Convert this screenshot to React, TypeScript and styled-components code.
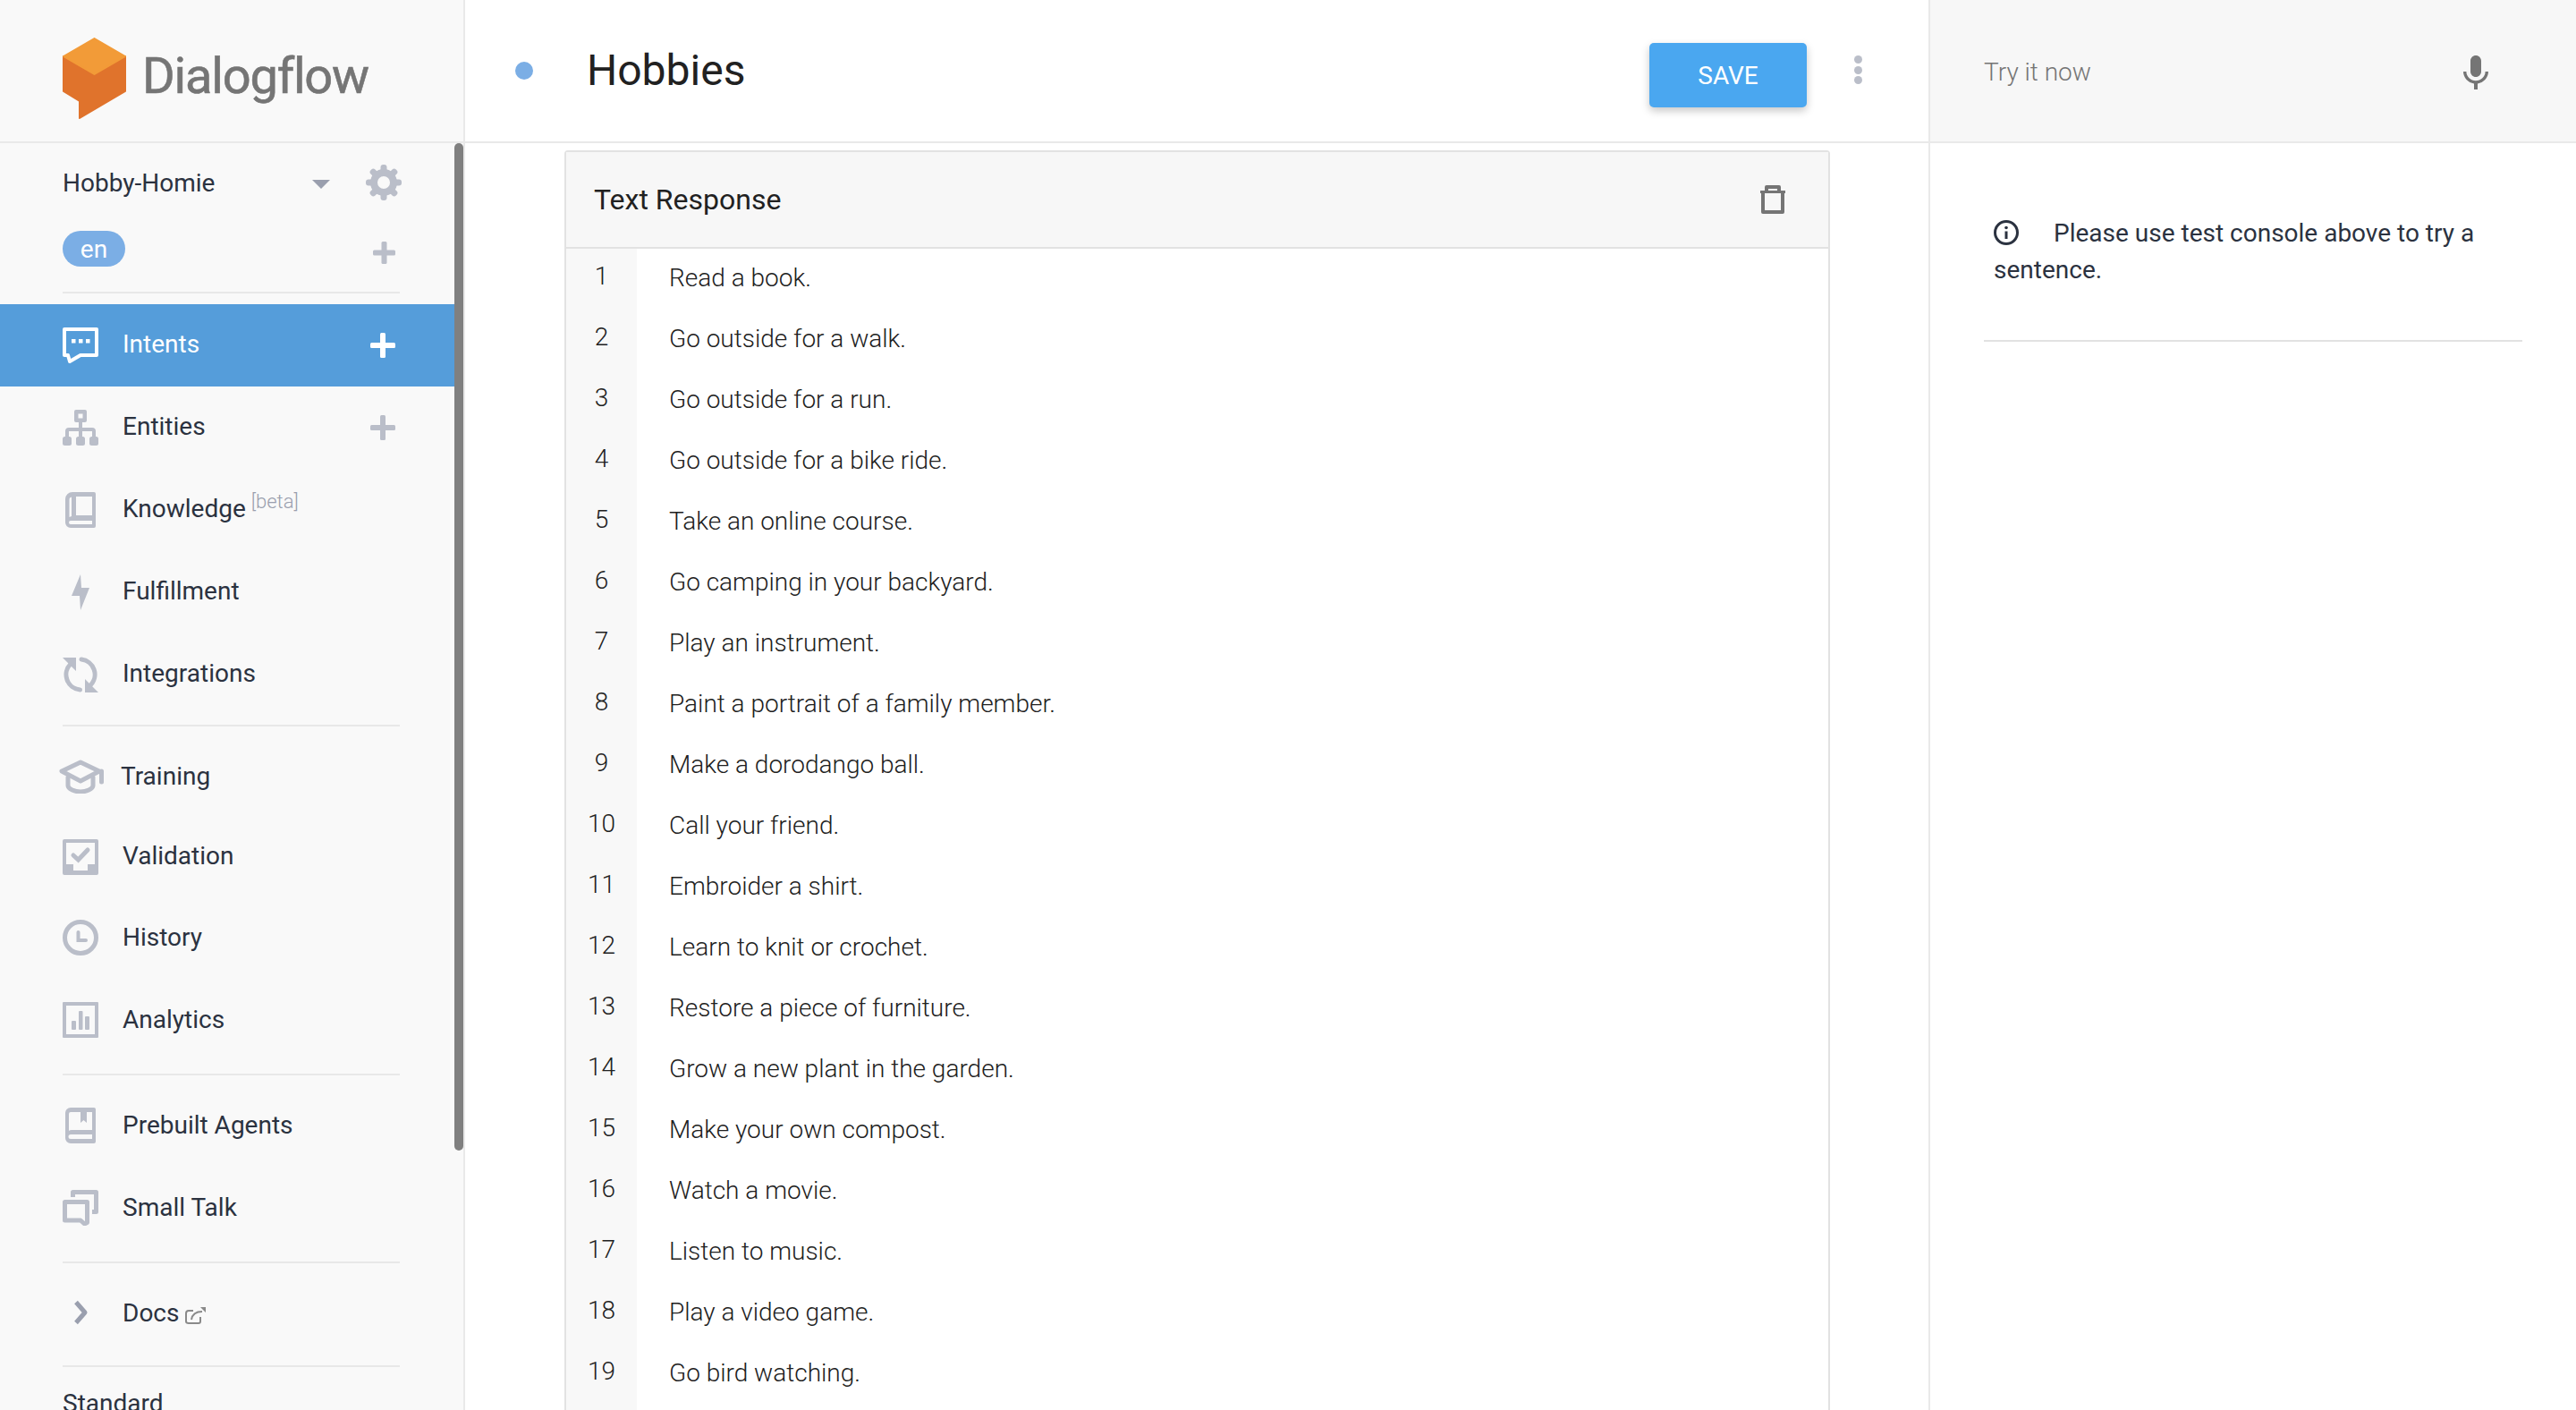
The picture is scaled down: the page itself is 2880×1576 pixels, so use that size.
import React from 'react';
import styled, {createGlobalStyle} from 'styled-components';

const GlobalStyle = createGlobalStyle`
  html, body {
    margin: 0;
    padding: 0;
    background: #fff;
    overflow: hidden;
  }
  * {
    box-sizing: border-box;
  }
  body {
    font-family: Roboto, "Liberation Sans", sans-serif;
    font-size: 28px;
    color: #2b3240;
  }
`

const Page = styled.div`
  display: flex;
  width: 2880px;
  height: 1576px;
  overflow: hidden;
`

/* sidebar */

const Sidebar = styled.aside`
  position: relative;
  flex: 0 0 520px;
  height: 100%;
  overflow: hidden;
  background: #f9f9f9;
  border-right: 2px solid #e9e9e9;
`

const Scrollbar = styled.div`
  position: absolute;
  top: 160px;
  left: 508px;
  width: 10px;
  height: 1126px;
  background: #808080;
  border-radius: 5px;
`

const LogoBar = styled.div`
  display: flex;
  align-items: center;
  height: 160px;
  padding: 18px 0 0 70px;
  border-bottom: 2px solid #e9e9e9;
`

const LogoText = styled.span`
  margin: -7px 0 0 18px;
  font-size: 56px;
  letter-spacing: -1.2px;
  color: #757575;
  line-height: 60px;
  -webkit-text-stroke: 0.6px #757575;
`

const AgentRow = styled.div`
  display: flex;
  align-items: center;
  height: 88px;
  width: 508px;
  padding: 0 59px 0 70px;
`

const AgentName = styled.span`
  flex: 1;
`

const Caret = styled.span`
  width: 0;
  height: 0;
  margin: 4px 40px 0 0;
  border-left: 10px solid transparent;
  border-right: 10px solid transparent;
  border-top: 10px solid #9a9fae;
`

const LangRow = styled.div`
  display: flex;
  align-items: center;
  justify-content: space-between;
  height: 60px;
  width: 508px;
  padding: 0 66px 0 70px;
`

const LangChip = styled.span`
  display: flex;
  align-items: center;
  justify-content: center;
  width: 70px;
  height: 40px;
  border-radius: 20px;
  background: #7baee5;
  color: #fff;
`

const Divider = styled.div<{ $top: number }>`
  width: 377px;
  height: 2px;
  margin: ${p => p.$top}px 0 0 70px;
  background: #e8e8e8;
`

const Nav = styled.nav<{ $top: number }>`
  width: 508px;
  margin-top: ${p => p.$top}px;
`

const NavItem = styled.div<{ $active?: boolean, $height?: number }>`
  display: flex;
  align-items: center;
  height: ${p => p.$height || 92}px;
  padding: 0 66px 0 70px;
  background: ${p => p.$active ? '#559dda' : 'transparent'};
  color: ${p => p.$active ? '#fff' : '#2b3240'};
`

const IconSlot = styled.span`
  display: flex;
  flex: 0 0 40px;
  min-width: 0;
  justify-content: center;
  align-items: center;
  height: 40px;
  margin-right: 27px;
  color: #babec9;

  svg {
    flex-shrink: 0;
    display: block;
  }
`

const NavLabel = styled.span<{ $tight?: boolean, $low?: boolean }>`
  margin-left: ${p => p.$tight ? -2 : 0}px;
  margin-top: ${p => p.$low ? -1 : -3}px;
`

const Beta = styled.sup`
  margin-left: 6px;
  font-size: 22px;
  font-weight: 300;
  line-height: 0;
  color: #9a9fae;
`

const NavPlus = styled.span<{ $drop?: number }>`
  display: flex;
  margin-left: auto;
  margin-top: ${p => p.$drop || 0}px;
  color: #babec9;
`

const ActivePlus = styled(NavPlus)`
  color: #fff;
`

const DocsLink = styled.span`
  display: flex;
  margin: 3px 0 0 7px;
`

const PlanLabel = styled.div`
  margin: 27px 0 0 70px;
  line-height: 28px;
`

/* main column */

const Main = styled.main`
  flex: 0 0 1636px;
  height: 100%;
  overflow: hidden;
  background: #fff;
`

const MainHeader = styled.header`
  display: flex;
  align-items: center;
  height: 160px;
  padding: 0 74px 0 56px;
  border-bottom: 2px solid #e9e9e9;
`

const StatusDot = styled.span`
  flex: 0 0 20px;
  height: 20px;
  border-radius: 50%;
  background: #7baee5;
`

const Title = styled.h1`
  margin: 0 0 2px 60px;
  font-size: 48px;
  font-weight: 400;
  color: #212121;
`

const SaveButton = styled.button`
  width: 176px;
  height: 72px;
  margin: 10px 0 0 auto;
  border: 0;
  border-radius: 5px;
  background: #4aa7f0;
  color: #fff;
  font-family: Roboto, sans-serif;
  font-size: 28px;
  box-shadow: 0 4px 10px rgba(0, 0, 0, .22);
`

const MoreDots = styled.span`
  display: flex;
  flex-direction: column;
  gap: 2.5px;
  margin: -2px 0 0 53px;

  i {
    width: 9px;
    height: 9px;
    border-radius: 50%;
    background: #babec9;
  }
`

const Body = styled.div`
  padding: 8px 0 0 111px;
`

const Card = styled.section`
  width: 1415px;
  border: 2px solid #e2e2e2;
  border-bottom: 0;
  border-radius: 4px 4px 0 0;
`

const CardHeader = styled.div`
  display: flex;
  align-items: center;
  justify-content: space-between;
  height: 108px;
  padding: 0 47px 0 31px;
  background: #f7f7f7;
  border-bottom: 2px solid #e2e2e2;
  color: #212121;
  font-size: 32px;
`

const Row = styled.div`
  display: flex;
  height: 68px;
`

const RowNumber = styled.div`
  flex: 0 0 79px;
  background: #f8f8f8;
  text-align: center;
  line-height: 62px;
  font-weight: 300;
  color: #212121;
`

const RowText = styled.div`
  padding-left: 36px;
  line-height: 66px;
  font-weight: 300;
  color: #212121;
`

/* test console */

const Console = styled.aside`
  flex: 1;
  height: 100%;
  border-left: 2px solid #e9e9e9;
`

const ConsoleHeader = styled.div`
  display: flex;
  align-items: center;
  justify-content: space-between;
  height: 160px;
  padding: 3px 88px 0 60px;
  background: #f7f7f7;
  border-bottom: 2px solid #e9e9e9;
  color: #757575;
  font-weight: 300;

  svg {
    margin-top: 2px;
  }
`

const ConsoleBody = styled.div`
  padding: 80px 60px 0;
`

const Message = styled.p`
  margin: 0;
  padding-left: 11px;
  line-height: 41px;
  color: #2b3240;

  svg {
    display: inline-block;
    vertical-align: -4px;
    margin-right: 39px;
  }
`

const ConsoleRule = styled.div`
  height: 2px;
  margin-top: 58px;
  background: #e2e2e2;
`

/* drawings */

const Logo = () => (
  <svg width="71" height="92" viewBox="0 0 71 92">
    <path fill="#e0732c" stroke="#e0732c" strokeWidth="2" strokeLinejoin="round"
          d="M1 21 35.500 41 70 21V60L19 90V71L1 60Z"/>
    <path fill="#f29b38" stroke="#f29b38" strokeWidth="2" strokeLinejoin="round"
          d="M35.500 1 70 21 35.500 41 1 21Z"/>
  </svg>
)

const TEETH = [0, 45, 90, 135, 180, 225, 270, 315]

const Gear = () => (
  <svg width="40" height="40" viewBox="0 0 40 40" fill="#babec9">
    {TEETH.map(angle =>
      <rect key={angle} x="16.500" y="0" width="7" height="10" rx="3" transform={`rotate(${angle} 20 20)`}/>
    )}
    <circle cx="20" cy="20" r="11" fill="none" stroke="#babec9" strokeWidth="8"/>
  </svg>
)

const Plus = ({size, weight}: { size: number, weight: number }) => (
  <svg width={size} height={size} viewBox={`0 0 ${size} ${size}`} fill="currentColor">
    <rect x={(size - weight) / 2} width={weight} height={size} rx="1.500"/>
    <rect y={(size - weight) / 2} width={size} height={weight} rx="1.500"/>
  </svg>
)

const IntentsIcon = () => (
  <svg width="40" height="40" viewBox="0 0 40 40">
    <path fill="none" stroke="#fff" strokeWidth="4" strokeLinejoin="round" d="M2 2H38V31H20L8 38 6 31H2Z"/>
    <rect x="10" y="13" width="4.500" height="4.500" fill="#fff"/>
    <rect x="18" y="13" width="4.500" height="4.500" fill="#fff"/>
    <rect x="26" y="13" width="4.500" height="4.500" fill="#fff"/>
  </svg>
)

const EntitiesIcon = () => (
  <svg width="40" height="40" viewBox="0 0 40 40" fill="currentColor">
    <path fillRule="evenodd" d="M15 0h10a2 2 0 0 1 2 2v10a2 2 0 0 1-2 2H15a2 2 0 0 1-2-2V2a2 2 0 0 1 2-2zM17.500 4.500v5h5v-5z"/>
    <rect x="18" y="13" width="4" height="19"/>
    <path d="M3 24a4 4 0 0 1 4-4h26a4 4 0 0 1 4 4v8h-4v-8H7v8H3z"/>
    <rect y="30" width="10" height="10" rx="2.500"/>
    <rect x="15" y="30" width="10" height="10" rx="2.500"/>
    <rect x="30" y="30" width="10" height="10" rx="2.500"/>
  </svg>
)

const KnowledgeIcon = () => (
  <svg width="40" height="40" viewBox="0 0 40 40" fill="currentColor">
    <path fillRule="evenodd" d="M11 0H35a2 2 0 0 1 2 2V38a2 2 0 0 1-2 2H9a6 6 0 0 1-6-6V8a8 8 0 0 1 8-8zM15 5V26H33V5zM8 6.500Q7.500 7 7.500 9V28L10 27V5.500zM9 32a2 2 0 0 0 0 4H33V32z"/>
  </svg>
)

const BoltIcon = () => (
  <svg width="40" height="40" viewBox="0 0 40 40" fill="currentColor">
    <path d="M20 0 10 24H19L20 40 30 15H21Z"/>
  </svg>
)

const SyncIcon = () => (
  <svg width="40" height="40" viewBox="0 0 40 40">
    <path fill="none" stroke="currentColor" strokeWidth="5" strokeLinecap="round" d="M9 8A17 17 0 0 0 19.500 37M21 3A17 17 0 0 1 31 32"/>
    <path fill="currentColor" d="M0 1H15V16ZM40 40H25V25Z"/>
  </svg>
)

const CapIcon = () => (
  <svg width="52" height="38" viewBox="0 0 52 38" fill="none" stroke="currentColor" strokeWidth="5" strokeLinejoin="round" strokeLinecap="round">
    <path d="M26 3 5 13 26 24 47 13Z"/>
    <path d="M12 20V29C12 33 20 36 26 36S40 33 40 29V20"/>
    <path d="M49.500 13V25"/>
  </svg>
)

const ValidationIcon = () => (
  <svg width="40" height="40" viewBox="0 0 40 40" fill="currentColor">
    <path fillRule="evenodd" d="M2 0H38a2 2 0 0 1 2 2V38a2 2 0 0 1-2 2H2a2 2 0 0 1-2-2V2a2 2 0 0 1 2-2zM4 4V28H12V35H28V28H36V4z"/>
    <path fill="none" stroke="currentColor" strokeWidth="5" strokeLinecap="round" d="M12 18 17.500 23 28 12"/>
  </svg>
)

const ClockIcon = () => (
  <svg width="40" height="40" viewBox="0 0 40 40" fill="none" stroke="currentColor">
    <circle cx="20" cy="20" r="17.500" strokeWidth="5"/>
    <path strokeWidth="4" strokeLinecap="round" d="M17.500 14V23H26"/>
  </svg>
)

const AnalyticsIcon = () => (
  <svg width="40" height="40" viewBox="0 0 40 40" fill="currentColor">
    <path fillRule="evenodd" d="M1 0H39a1 1 0 0 1 1 1V39a1 1 0 0 1-1 1H1a1 1 0 0 1-1-1V1a1 1 0 0 1 1-1zM4 4V36H36V4z"/>
    <rect x="10" y="21" width="5" height="10" rx="1"/>
    <rect x="18" y="10" width="4.500" height="21" rx="1"/>
    <rect x="25" y="16" width="5" height="15" rx="1"/>
  </svg>
)

const PrebuiltIcon = () => (
  <svg width="40" height="40" viewBox="0 0 40 40" fill="currentColor">
    <path fillRule="evenodd" d="M9 0H35a2 2 0 0 1 2 2V38a2 2 0 0 1-2 2H9a6 6 0 0 1-6-6V6a6 6 0 0 1 6-6zM9 5a2 2 0 0 0-2 2V26Q8 25 10 25H33V5H27V17L23.500 14 20 17V5zM9 30a2.500 2.500 0 0 0 0 5H33V30z"/>
  </svg>
)

const SmallTalkIcon = () => (
  <svg width="40" height="40" viewBox="0 0 40 40" fill="none" stroke="currentColor" strokeWidth="5" strokeLinejoin="round">
    <path d="M11.500 8V2.500H37.500V24.500H33"/>
    <path d="M2.500 13.500H27.500V36.500L24.500 38 20 34H2.500Z"/>
  </svg>
)

const Chevron = () => (
  <svg width="40" height="40" viewBox="0 0 40 40" fill="none" stroke="#9a9fae" strokeWidth="5" strokeLinejoin="round">
    <path d="M15 7.500 25 19 15 30.500"/>
  </svg>
)

const ExternalLink = () => (
  <svg width="24" height="20" viewBox="0 0 24 20" fill="none" stroke="#8a8a8a" strokeWidth="2">
    <path d="M17 12V17Q17 19 15 19H4Q1 19 1 17V8Q1 5 4 5H9"/>
    <path d="M7 15C8 9 12 6 19 6"/>
    <path d="M16 1H23V7L17 1" fill="#8a8a8a" stroke="none"/>
  </svg>
)

const TrashIcon = () => (
  <svg width="30" height="34" viewBox="0 0 30 34" fill="none" stroke="#757575" strokeWidth="4" strokeLinejoin="round">
    <path d="M4 9V31H26V9"/>
    <path d="M1 8.500H29" strokeWidth="3"/>
    <path d="M8 8V3H22V8" strokeWidth="4"/>
  </svg>
)

const MicIcon = () => (
  <svg width="48" height="48" viewBox="0 0 24 24" fill="#757575">
    <path d="M12 14c1.660 0 3-1.340 3-3V5c0-1.660-1.340-3-3-3S9 3.340 9 5v6c0 1.660 1.340 3 3 3zm5.300-3c0 3-2.540 5.100-5.300 5.100S6.700 14 6.700 11H5c0 3.410 2.720 6.230 6 6.720V21h2v-3.280c3.280-.480 6-3.300 6-6.720h-1.700z"/>
  </svg>
)

const InfoIcon = () => (
  <svg width="28" height="28" viewBox="0 0 28 28" fill="none" stroke="#2b3240">
    <circle cx="14" cy="14" r="12.500" strokeWidth="3"/>
    <path d="M14 12.500V21" strokeWidth="3"/>
    <circle cx="14" cy="8.500" r="1.800" fill="#2b3240" stroke="none"/>
  </svg>
)

const HOBBIES = [
    'Read a book.',
    'Go outside for a walk.',
    'Go outside for a run.',
    'Go outside for a bike ride.',
    'Take an online course.',
    'Go camping in your backyard.',
    'Play an instrument.',
    'Paint a portrait of a family member.',
    'Make a dorodango ball.',
    'Call your friend.',
    'Embroider a shirt.',
    'Learn to knit or crochet.',
    'Restore a piece of furniture.',
    'Grow a new plant in the garden.',
    'Make your own compost.',
    'Watch a movie.',
    'Listen to music.',
    'Play a video game.',
    'Go bird watching.',
]

const App = () => {
    return (
        <Page>
            <GlobalStyle/>
            <Sidebar>
                <LogoBar>
                    <Logo/>
                    <LogoText>Dialogflow</LogoText>
                </LogoBar>
                <AgentRow>
                    <AgentName>Hobby-Homie</AgentName>
                    <Caret/>
                    <Gear/>
                </AgentRow>
                <LangRow>
                    <LangChip>en</LangChip>
                    <NavPlus $drop={8}><Plus size={25} weight={6}/></NavPlus>
                </LangRow>
                <Divider $top={18}/>
                <Nav $top={12}>
                    <NavItem $active>
                        <IconSlot><IntentsIcon/></IconSlot>
                        <NavLabel>Intents</NavLabel>
                        <ActivePlus><Plus size={28} weight={6}/></ActivePlus>
                    </NavItem>
                    <NavItem>
                        <IconSlot><EntitiesIcon/></IconSlot>
                        <NavLabel>Entities</NavLabel>
                        <NavPlus><Plus size={28} weight={6}/></NavPlus>
                    </NavItem>
                    <NavItem>
                        <IconSlot><KnowledgeIcon/></IconSlot>
                        <NavLabel>Knowledge<Beta>[beta]</Beta></NavLabel>
                    </NavItem>
                    <NavItem>
                        <IconSlot><BoltIcon/></IconSlot>
                        <NavLabel>Fulfillment</NavLabel>
                    </NavItem>
                    <NavItem>
                        <IconSlot><SyncIcon/></IconSlot>
                        <NavLabel>Integrations</NavLabel>
                    </NavItem>
                </Nav>
                <Divider $top={10}/>
                <Nav $top={10}>
                    <NavItem>
                        <IconSlot><CapIcon/></IconSlot>
                        <NavLabel $tight $low>Training</NavLabel>
                    </NavItem>
                    <NavItem $height={88}>
                        <IconSlot><ValidationIcon/></IconSlot>
                        <NavLabel>Validation</NavLabel>
                    </NavItem>
                    <NavItem>
                        <IconSlot><ClockIcon/></IconSlot>
                        <NavLabel $low>History</NavLabel>
                    </NavItem>
                    <NavItem>
                        <IconSlot><AnalyticsIcon/></IconSlot>
                        <NavLabel $low>Analytics</NavLabel>
                    </NavItem>
                </Nav>
                <Divider $top={14}/>
                <Nav $top={10}>
                    <NavItem>
                        <IconSlot><PrebuiltIcon/></IconSlot>
                        <NavLabel $low>Prebuilt Agents</NavLabel>
                    </NavItem>
                    <NavItem>
                        <IconSlot><SmallTalkIcon/></IconSlot>
                        <NavLabel $low>Small Talk</NavLabel>
                    </NavItem>
                </Nav>
                <Divider $top={14}/>
                <Nav $top={10}>
                    <NavItem>
                        <IconSlot><Chevron/></IconSlot>
                        <NavLabel $low>Docs</NavLabel>
                        <DocsLink><ExternalLink/></DocsLink>
                    </NavItem>
                </Nav>
                <Divider $top={12}/>
                <PlanLabel>Standard</PlanLabel>
                <Scrollbar/>
            </Sidebar>
            <Main>
                <MainHeader>
                    <StatusDot/>
                    <Title>Hobbies</Title>
                    <SaveButton>SAVE</SaveButton>
                    <MoreDots><i/><i/><i/></MoreDots>
                </MainHeader>
                <Body>
                    <Card>
                        <CardHeader>
                            Text Response
                            <TrashIcon/>
                        </CardHeader>
                        {HOBBIES.map((hobby, index) =>
                            <Row key={hobby}>
                                <RowNumber>{index + 1}</RowNumber>
                                <RowText>{hobby}</RowText>
                            </Row>
                        )}
                        <Row><RowNumber/></Row>
                    </Card>
                </Body>
            </Main>
            <Console>
                <ConsoleHeader>
                    Try it now
                    <MicIcon/>
                </ConsoleHeader>
                <ConsoleBody>
                    <Message>
                        <InfoIcon/>
                        Please use test console above to try a sentence.
                    </Message>
                    <ConsoleRule/>
                </ConsoleBody>
            </Console>
        </Page>
    );
};

export default App;
